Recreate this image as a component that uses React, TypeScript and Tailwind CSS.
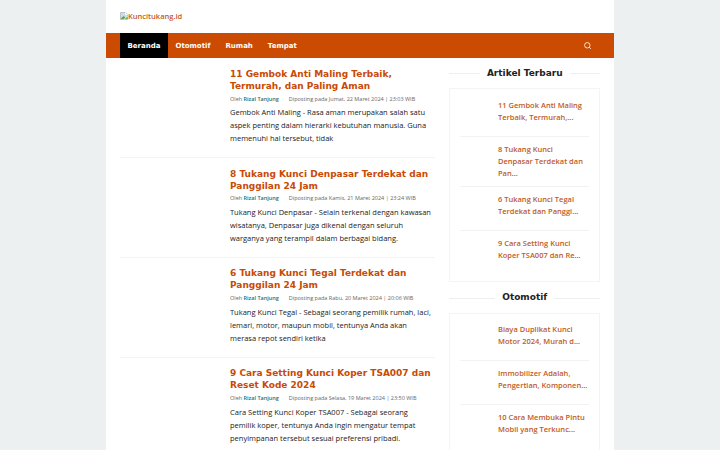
import { Fragment } from "react";

interface Post {
  title: string[];
  date: string;
  excerpt: string[];
}

interface WidgetProps {
  title: string;
  items: string[][];
}

const menu = ["Beranda", "Otomotif", "Rumah", "Tempat"];

const posts: Post[] = [
  {
    title: ["11 Gembok Anti Maling Terbaik,", "Termurah, dan Paling Aman"],
    date: "Jumat, 22 Maret 2024 | 23:03 WIB",
    excerpt: [
      "Gembok Anti Maling - Rasa aman merupakan salah satu",
      "aspek penting dalam hierarki kebutuhan manusia. Guna",
      "memenuhi hal tersebut, tidak",
    ],
  },
  {
    title: ["8 Tukang Kunci Denpasar Terdekat dan", "Panggilan 24 Jam"],
    date: "Kamis, 21 Maret 2024 | 23:24 WIB",
    excerpt: [
      "Tukang Kunci Denpasar - Selain terkenal dengan kawasan",
      "wisatanya, Denpasar juga dikenal dengan seluruh",
      "warganya yang terampil dalam berbagai bidang.",
    ],
  },
  {
    title: ["6 Tukang Kunci Tegal Terdekat dan", "Panggilan 24 Jam"],
    date: "Rabu, 20 Maret 2024 | 20:06 WIB",
    excerpt: [
      "Tukang Kunci Tegal - Sebagai seorang pemilik rumah, laci,",
      "lemari, motor, maupun mobil, tentunya Anda akan",
      "merasa repot sendiri ketika",
    ],
  },
  {
    title: ["9 Cara Setting Kunci Koper TSA007 dan", "Reset Kode 2024"],
    date: "Selasa, 19 Maret 2024 | 23:50 WIB",
    excerpt: [
      "Cara Setting Kunci Koper TSA007 - Sebagai seorang",
      "pemilik koper, tentunya Anda ingin mengatur tempat",
      "penyimpanan tersebut sesuai preferensi pribadi.",
    ],
  },
];

const latest = [
  ["11 Gembok Anti Maling", "Terbaik, Termurah,..."],
  ["8 Tukang Kunci", "Denpasar Terdekat dan", "Pan..."],
  ["6 Tukang Kunci Tegal", "Terdekat dan Panggi..."],
  ["9 Cara Setting Kunci", "Koper TSA007 dan Re..."],
];

const automotive = [
  ["Biaya Duplikat Kunci", "Motor 2024, Murah d..."],
  ["Immobilizer Adalah,", "Pengertian, Komponen..."],
  ["10 Cara Membuka Pintu", "Mobil yang Terkunc..."],
];

function Lines({ lines }: { lines: string[] }) {
  return (
    <>
      {lines.map((line, i) => (
        <Fragment key={line}>
          {i > 0 && <br />}
          {line}
        </Fragment>
      ))}
    </>
  );
}

function Article({ title, date, excerpt }: Post) {
  return (
    <article className="h-[99.9px] shrink-0 whitespace-nowrap border-b border-[#f4f4f4] pl-[110px] pt-[9.7px]">
      <h2 className="font-['DejaVu_Sans',sans-serif] text-[9px] font-bold leading-[12px] text-[#c94a05]">
        <Lines lines={title} />
      </h2>
      <div className="mt-[2px] flex h-[10px] items-center gap-[10px] text-[5.5px] text-[#666]">
        <span>
          Oleh <a className="font-semibold text-[#16707a]">Rizal Tanjung</a>
        </span>
        <span>Diposting pada {date}</span>
      </div>
      <p className="mt-[2.5px] text-[7.5px] leading-[13px] text-[#222]">
        <Lines lines={excerpt} />
      </p>
    </article>
  );
}

function Widget({ title, items }: WidgetProps) {
  return (
    <section className="mb-[10px]">
      <h3 className="flex h-[12px] items-center gap-[7px] whitespace-nowrap font-['DejaVu_Sans',sans-serif] text-[9px] font-bold text-[#222]">
        <span className="h-px flex-1 bg-[#eee]" />
        {title}
        <span className="h-px flex-1 bg-[#eee]" />
      </h3>
      <ul className="mt-[8.5px] border border-[#f4f4f4] px-[10px] pb-[7.5px] pt-[3.5px]">
        {items.map((item) => (
          <li
            key={item[0]}
            className="border-b border-[#f2f2f2] pb-[7px] pl-[37.5px] pt-[6px] last:border-0"
          >
            <a className="block min-h-[30px] whitespace-nowrap text-[7.5px] font-semibold leading-[12px] text-[#bf5a24]">
              <Lines lines={item} />
            </a>
          </li>
        ))}
      </ul>
    </section>
  );
}

export default function App() {
  return (
    <div className="h-[450px] overflow-hidden bg-[#ecf0f1] font-['Open_Sans',sans-serif]">
      <div className="ml-[106.4px] flex h-full w-[507.6px] flex-col bg-white">
        <header className="flex h-[34px] shrink-0 items-center px-[13.6px]">
          <a className="flex items-center text-[7.5px] font-semibold text-[#c25a22]">
            <svg className="mb-[2px] h-[8px] w-[8px]" viewBox="0 0 16 16">
              <path d="M1 1h10l4 4v10H1z" fill="#c9dcf5" stroke="#999" />
              <path d="M1 14l6-6 4 3 4-3v6z" fill="#58a846" />
              <path d="M11 1v4h4M8 15l7-7" fill="none" stroke="#fff" strokeWidth="2" />
            </svg>
            Kuncitukang.id
          </a>
        </header>

        <nav className="-mt-px flex h-[25px] shrink-0 items-center bg-[#cb4b02] pl-[13.6px] pr-[22.5px] font-['DejaVu_Sans',sans-serif] text-[7px] font-bold text-white">
          {menu.map((item, i) => (
            <a
              key={item}
              className={`flex h-full items-center px-[7.5px] pt-px ${i === 0 ? "bg-black" : ""}`}
            >
              {item}
            </a>
          ))}
          <svg
            className="ml-auto h-[7.5px] w-[7.5px]"
            viewBox="0 0 16 16"
            fill="none"
            stroke="currentColor"
            strokeWidth="1.7"
          >
            <circle cx="7" cy="7" r="5.8" />
            <path d="M11 11l4 4" />
          </svg>
        </nav>

        <div className="flex min-h-0 flex-1 overflow-hidden pl-[13.6px] pr-[14px]">
          <main className="flex w-[315px] shrink-0 flex-col">
            {posts.map((post) => (
              <Article key={post.title[0]} {...post} />
            ))}
          </main>
          <aside className="ml-auto w-[150.5px] pt-[9.5px]">
            <Widget title="Artikel Terbaru" items={latest} />
            <Widget title="Otomotif" items={automotive} />
          </aside>
        </div>
      </div>
    </div>
  );
}
